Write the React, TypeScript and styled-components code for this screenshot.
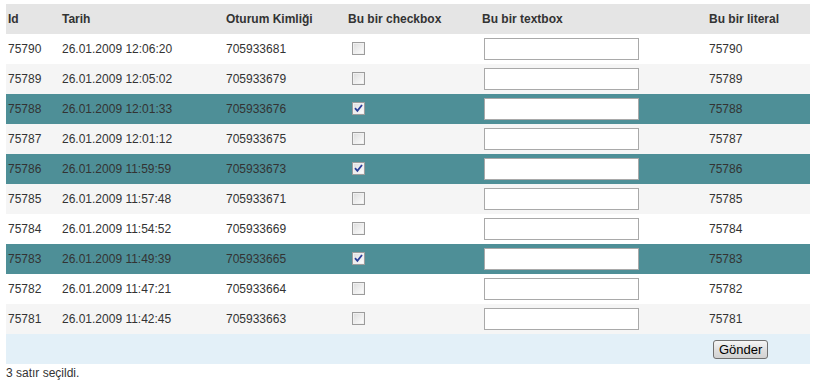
import React, { useState } from 'react';
import styled, { createGlobalStyle } from 'styled-components';

const GlobalStyle = createGlobalStyle`
  html, body {
    margin: 0;
    padding: 0;
    background: #ffffff;
  }
  body {
    font-family: "Liberation Sans", Arial, sans-serif;
    font-size: 12px;
    color: #333333;
  }
`;

const Page = styled.div`
  padding: 4px 6px 0 6px;
`;

const Grid = styled.table`
  width: 804px;
  border-collapse: collapse;
  border-spacing: 0;
  table-layout: fixed;
`;

const HeadCell = styled.th<{ w: number }>`
  width: ${({ w }) => w}px;
  height: 30px;
  padding: 0 0 0 2px;
  text-align: left;
  font-weight: bold;
  font-size: 12px;
  color: #333333;
  background: #e5e5e5;
`;

const Row = styled.tr<{ selected: boolean; alt: boolean }>`
  height: 30px;
  background: ${({ selected, alt }) => (selected ? '#4e8f97' : alt ? '#f5f5f5' : '#ffffff')};
`;

const Cell = styled.td`
  padding: 0 0 0 2px;
  font-size: 12px;
  color: #333333;
  vertical-align: middle;
  white-space: nowrap;
`;

const FooterRow = styled.tr`
  height: 30px;
  background: #e3f0f8;
`;

const ButtonCell = styled.td`
  padding: 0 0 0 6px;
  vertical-align: middle;
`;

const Box = styled.span`
  display: block;
  position: relative;
  width: 11px;
  height: 11px;
  margin: -1px 0 0 4px;
  border: 1px solid #9c9c9c;
  background: linear-gradient(135deg, #dcdcdc 0%, #f4f4f4 70%, #ffffff 100%);
  box-shadow: inset 0 0 0 1px #f0f0f0;
  cursor: pointer;
`;

const Tick = styled.svg`
  position: absolute;
  left: 1px;
  top: 1px;
`;

const TextInput = styled.input`
  display: block;
  box-sizing: border-box;
  width: 155px;
  height: 22px;
  margin: 0 0 0 2px;
  padding: 1px 3px;
  border: 1px solid #a9a9a9;
  background: #ffffff;
  font-family: "Liberation Sans", Arial, sans-serif;
  font-size: 12px;
  outline: none;
`;

const SubmitButton = styled.button`
  box-sizing: border-box;
  height: 19px;
  padding: 0 5px;
  border: 1px solid #707070;
  border-radius: 3px;
  background: linear-gradient(#f6f6f6, #dedede 55%, #d2d2d2);
  font-family: "Liberation Sans", Arial, sans-serif;
  font-size: 13px;
  color: #000000;
  line-height: 15px;
`;

const Status = styled.div`
  padding-top: 2px;
  font-size: 12px;
  color: #333333;
`;

const columns = [
  { label: 'Id', w: 52 },
  { label: 'Tarih', w: 162 },
  { label: 'Oturum Kimliği', w: 120 },
  { label: 'Bu bir checkbox', w: 132 },
  { label: 'Bu bir textbox', w: 225 },
  { label: 'Bu bir literal', w: 101 },
];

const rows = [
  { id: 75790, date: '26.01.2009 12:06:20', session: '705933681', checked: false },
  { id: 75789, date: '26.01.2009 12:05:02', session: '705933679', checked: false },
  { id: 75788, date: '26.01.2009 12:01:33', session: '705933676', checked: true },
  { id: 75787, date: '26.01.2009 12:01:12', session: '705933675', checked: false },
  { id: 75786, date: '26.01.2009 11:59:59', session: '705933673', checked: true },
  { id: 75785, date: '26.01.2009 11:57:48', session: '705933671', checked: false },
  { id: 75784, date: '26.01.2009 11:54:52', session: '705933669', checked: false },
  { id: 75783, date: '26.01.2009 11:49:39', session: '705933665', checked: true },
  { id: 75782, date: '26.01.2009 11:47:21', session: '705933664', checked: false },
  { id: 75781, date: '26.01.2009 11:42:45', session: '705933663', checked: false },
];

const CheckBox: React.FC<{ checked: boolean; onToggle: () => void }> = ({ checked, onToggle }) => (
  <Box role="checkbox" aria-checked={checked} onClick={onToggle}>
    {checked && (
      <Tick width="9" height="9" viewBox="0 0 9 9">
        <path d="M1 4.2 L3.4 6.8 L8 1" fill="none" stroke="#2a3f9a" strokeWidth="1.8" />
      </Tick>
    )}
  </Box>
);

export default function App() {
  const [selected, setSelected] = useState<boolean[]>(rows.map((r) => r.checked));
  const count = selected.filter(Boolean).length;

  const toggle = (i: number) =>
    setSelected((prev) => prev.map((v, j) => (j === i ? !v : v)));

  return (
    <Page>
      <GlobalStyle />
      <Grid>
        <thead>
          <tr>
            {columns.map((c) => (
              <HeadCell key={c.label} w={c.w}>
                {c.label}
              </HeadCell>
            ))}
          </tr>
        </thead>
        <tbody>
          {rows.map((r, i) => (
            <Row key={r.id} selected={selected[i]} alt={i % 2 === 1}>
              <Cell>{r.id}</Cell>
              <Cell>{r.date}</Cell>
              <Cell>{r.session}</Cell>
              <Cell>
                <CheckBox checked={selected[i]} onToggle={() => toggle(i)} />
              </Cell>
              <Cell>
                <TextInput type="text" />
              </Cell>
              <Cell>{r.id}</Cell>
            </Row>
          ))}
          <FooterRow>
            <td colSpan={5} />
            <ButtonCell>
              <SubmitButton type="button">Gönder</SubmitButton>
            </ButtonCell>
          </FooterRow>
        </tbody>
      </Grid>
      <Status>{count} satır seçildi.</Status>
    </Page>
  );
}
